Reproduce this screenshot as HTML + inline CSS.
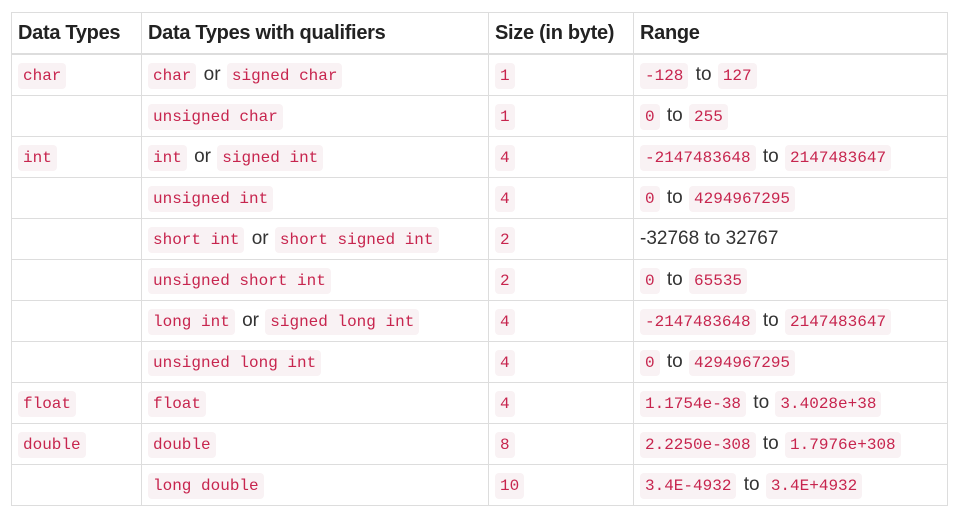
<!DOCTYPE html>
<html><head><style>
body{margin:0;background:#fff;font-family:"Liberation Sans",sans-serif;color:#333;}
table{position:absolute;left:11px;top:12px;border-collapse:collapse;width:937px;}
td,th{border:1px solid #ddd;padding:0 6px;height:40px;text-align:left;font-size:19px;white-space:nowrap;}
th{font-weight:600;font-size:20px;height:40px;border-bottom:2px solid #ddd;letter-spacing:-0.3px;color:#222}
code{font-family:"Liberation Mono",monospace;font-size:16px;color:#c7254e;background:#f9f2f4;border-radius:4px;padding:4px 5px;margin:0 2px 0 1px;}
td code:first-child{margin-left:0}
col.a{width:130px}col.b{width:347px}col.c{width:145px}
</style></head><body>
<table>
<colgroup><col class="a"><col class="b"><col class="c"><col></colgroup>
<tr><th>Data Types</th><th>Data Types with qualifiers</th><th>Size (in byte)</th><th>Range</th></tr>
<tr><td><code>char</code></td><td><code>char</code> or <code>signed char</code></td><td><code>1</code></td><td><code>-128</code> to <code>127</code></td></tr>
<tr><td></td><td><code>unsigned char</code></td><td><code>1</code></td><td><code>0</code> to <code>255</code></td></tr>
<tr><td><code>int</code></td><td><code>int</code> or <code>signed int</code></td><td><code>4</code></td><td><code>-2147483648</code> to <code>2147483647</code></td></tr>
<tr><td></td><td><code>unsigned int</code></td><td><code>4</code></td><td><code>0</code> to <code>4294967295</code></td></tr>
<tr><td></td><td><code>short int</code> or <code>short signed int</code></td><td><code>2</code></td><td>-32768 to 32767</td></tr>
<tr><td></td><td><code>unsigned short int</code></td><td><code>2</code></td><td><code>0</code> to <code>65535</code></td></tr>
<tr><td></td><td><code>long int</code> or <code>signed long int</code></td><td><code>4</code></td><td><code>-2147483648</code> to <code>2147483647</code></td></tr>
<tr><td></td><td><code>unsigned long int</code></td><td><code>4</code></td><td><code>0</code> to <code>4294967295</code></td></tr>
<tr><td><code>float</code></td><td><code>float</code></td><td><code>4</code></td><td><code>1.1754e-38</code> to <code>3.4028e+38</code></td></tr>
<tr><td><code>double</code></td><td><code>double</code></td><td><code>8</code></td><td><code>2.2250e-308</code> to <code>1.7976e+308</code></td></tr>
<tr><td></td><td><code>long double</code></td><td><code>10</code></td><td><code>3.4E-4932</code> to <code>3.4E+4932</code></td></tr>
</table>
</body></html>
